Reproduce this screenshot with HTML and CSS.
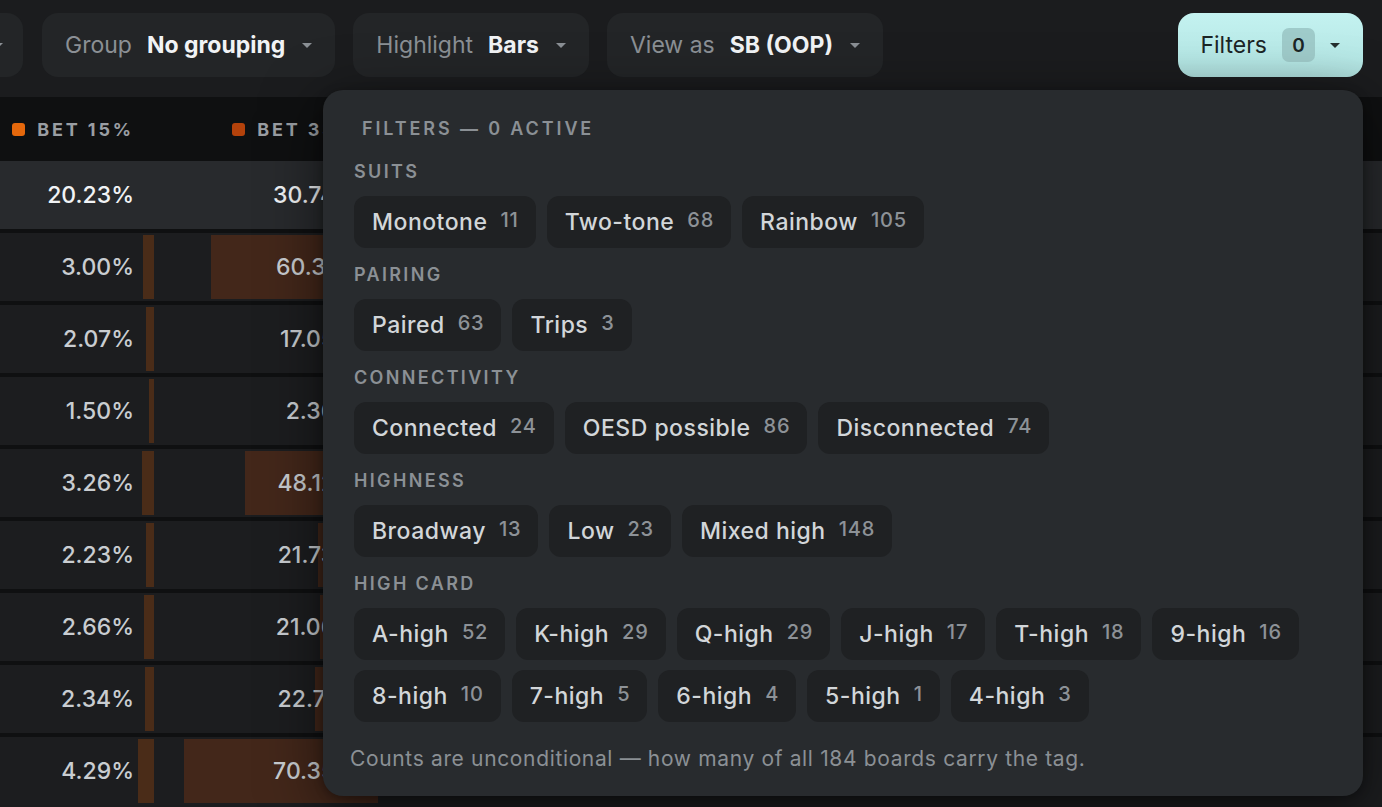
FILE: index.html
```html
<!DOCTYPE html>
<html lang="en">
<head>
    <meta charset="UTF-8">
    <meta name="viewport" content="width=device-width, initial-scale=1.0">
    <title>Board Explorer</title>
    <link rel="stylesheet" href="styles.css">
</head>
<body>
    <div class="toolbar">
        <div class="tool tool-cut">
            <span class="caret"></span>
        </div>
        <div class="tool">
            <span class="tool-label">Group</span>
            <span class="tool-value">No grouping</span>
            <span class="caret"></span>
        </div>
        <div class="tool">
            <span class="tool-label">Highlight</span>
            <span class="tool-value">Bars</span>
            <span class="caret"></span>
        </div>
        <div class="tool">
            <span class="tool-label">View as</span>
            <span class="tool-value">SB (OOP)</span>
            <span class="caret"></span>
        </div>
        <div class="tool tool-filters">
            <span class="filters-label">Filters</span>
            <span class="filters-count">0</span>
            <span class="caret caret-dark"></span>
        </div>
    </div>

    <div class="table">
        <div class="row row-head">
            <div class="cell c1"><span class="dot dot-a"></span>BET 15%</div>
            <div class="cell c2"><span class="dot dot-b"></span>BET 33%</div>
            <div class="cell rest"></div>
        </div>
        <div class="row row-total">
            <div class="cell c1">20.23%</div>
            <div class="cell c2">30.74%</div>
            <div class="cell rest"></div>
        </div>
        <div class="row">
            <div class="cell c1 bar" style="--w:11px">3.00%</div>
            <div class="cell c2 bar" style="--w:167px">60.31%</div>
            <div class="cell rest"></div>
        </div>
        <div class="row">
            <div class="cell c1 bar" style="--w:8px">2.07%</div>
            <div class="cell c2 bar" style="--w:47px">17.05%</div>
            <div class="cell rest"></div>
        </div>
        <div class="row">
            <div class="cell c1 bar" style="--w:5px">1.50%</div>
            <div class="cell c2 bar" style="--w:6px">2.36%</div>
            <div class="cell rest"></div>
        </div>
        <div class="row">
            <div class="cell c1 bar" style="--w:12px">3.26%</div>
            <div class="cell c2 bar" style="--w:133px">48.12%</div>
            <div class="cell rest"></div>
        </div>
        <div class="row">
            <div class="cell c1 bar" style="--w:8px">2.23%</div>
            <div class="cell c2 bar" style="--w:60px">21.73%</div>
            <div class="cell rest"></div>
        </div>
        <div class="row">
            <div class="cell c1 bar" style="--w:10px">2.66%</div>
            <div class="cell c2 bar" style="--w:58px">21.06%</div>
            <div class="cell rest"></div>
        </div>
        <div class="row">
            <div class="cell c1 bar" style="--w:9px">2.34%</div>
            <div class="cell c2 bar" style="--w:63px">22.71%</div>
            <div class="cell rest"></div>
        </div>
        <div class="row">
            <div class="cell c1 bar" style="--w:16px">4.29%</div>
            <div class="cell c2 bar" style="--w:194px">70.35%</div>
            <div class="cell rest"></div>
        </div>
    </div>

    <div class="filters-panel">
        <div class="panel-title">Filters — 0 active</div>

        <div class="section">
            <div class="section-label">Suits</div>
            <div class="chips">
                <div class="chip">Monotone<span class="num">11</span></div>
                <div class="chip">Two-tone<span class="num">68</span></div>
                <div class="chip">Rainbow<span class="num">105</span></div>
            </div>
        </div>

        <div class="section">
            <div class="section-label">Pairing</div>
            <div class="chips">
                <div class="chip">Paired<span class="num">63</span></div>
                <div class="chip">Trips<span class="num">3</span></div>
            </div>
        </div>

        <div class="section">
            <div class="section-label">Connectivity</div>
            <div class="chips">
                <div class="chip">Connected<span class="num">24</span></div>
                <div class="chip">OESD possible<span class="num">86</span></div>
                <div class="chip">Disconnected<span class="num">74</span></div>
            </div>
        </div>

        <div class="section">
            <div class="section-label">Highness</div>
            <div class="chips">
                <div class="chip">Broadway<span class="num">13</span></div>
                <div class="chip">Low<span class="num">23</span></div>
                <div class="chip">Mixed high<span class="num">148</span></div>
            </div>
        </div>

        <div class="section">
            <div class="section-label">High card</div>
            <div class="chips">
                <div class="chip">A-high<span class="num">52</span></div>
                <div class="chip">K-high<span class="num">29</span></div>
                <div class="chip">Q-high<span class="num">29</span></div>
                <div class="chip">J-high<span class="num">17</span></div>
                <div class="chip">T-high<span class="num">18</span></div>
                <div class="chip">9-high<span class="num">16</span></div>
                <div class="chip">8-high<span class="num">10</span></div>
                <div class="chip">7-high<span class="num">5</span></div>
                <div class="chip">6-high<span class="num">4</span></div>
                <div class="chip">5-high<span class="num">1</span></div>
                <div class="chip">4-high<span class="num">3</span></div>
            </div>
        </div>

        <p class="panel-note">Counts are unconditional — how many of all 184 boards carry the tag.</p>
    </div>
</body>
</html>
```

FILE: styles.css
```css
body {
    font-family: Inter, "Noto Sans", sans-serif;
    background-color: #1b1c1e;
    color: #e8eaec;
    margin: 0;
    padding: 0;
    height: 807px;
    overflow: hidden;
    position: relative;
}

/* toolbar */
.toolbar {
    display: flex;
    align-items: center;
    gap: 18px;
    height: 97px;
    padding-right: 19px;
    padding-bottom: 7px;
    margin-left: -157px;
    box-sizing: border-box;
}
.tool {
    display: flex;
    align-items: center;
    height: 64px;
    padding: 0 23px;
    background: #232527;
    border-radius: 16px;
    font-size: 23px;
    white-space: nowrap;
    box-sizing: border-box;
}
.tool-cut {
    width: 180px;
    justify-content: flex-end;
    padding-right: 20px;
    margin-right: 1px;
}
.tool-label {
    color: #8b9095;
    margin-right: 15px;
}
.tool-value {
    color: #f1f3f5;
    font-weight: 700;
    margin-right: 17px;
}
.caret {
    width: 0;
    height: 0;
    border-left: 5px solid transparent;
    border-right: 5px solid transparent;
    border-top: 5px solid #8b9095;
}
.caret-dark {
    border-top-color: #25302f;
}
.tool-filters {
    margin-left: auto;
    padding: 0 23px 0 22px;
    background: linear-gradient(180deg, #c4f2f0 0%, #b6e8e6 70%, #acdcda 100%);
    color: #1b2526;
}
.filters-label {
    margin-right: 15px;
}
.filters-count {
    display: flex;
    align-items: center;
    justify-content: center;
    width: 33px;
    height: 34px;
    border-radius: 7px;
    background: #9fcbca;
    font-size: 19px;
    font-weight: 600;
    margin-right: 15px;
}

/* table */
.table {
    display: flex;
    flex-direction: column;
    gap: 4px;
    background: #0f1011;
}
.row {
    display: flex;
    height: 68px;
    background: #1c1d1f;
}
.row-head {
    height: 64px;
    background: #0f1011;
    margin-bottom: -4px;
}
.row-total {
    background: #282a2d;
}
.cell {
    display: flex;
    align-items: center;
    justify-content: flex-end;
    box-sizing: border-box;
    padding-right: 20px;
    font-size: 23px;
    font-weight: 500;
    color: #c9cdd1;
}
.row-total .cell {
    color: #f1f3f5;
}
.row-head .cell {
    font-size: 18px;
    font-weight: 700;
    letter-spacing: 0.16em;
    color: #9a9ea3;
    padding-right: 20px;
}
.c1 {
    width: 154px;
    --bar: #4a2c18;
}
.c2 {
    width: 224px;
    --bar: #43271a;
}
.rest {
    flex: 1;
}
.bar {
    background: linear-gradient(var(--bar), var(--bar)) right center / var(--w) calc(100% - 4px) no-repeat;
}
.dot {
    width: 13px;
    height: 13px;
    border-radius: 3px;
    margin-right: 12px;
}
.dot-a {
    background: #e5680c;
}
.dot-b {
    background: #b4420b;
}

/* filters dropdown */
.filters-panel {
    position: absolute;
    top: 90px;
    left: 323px;
    width: 1040px;
    height: 706px;
    box-sizing: border-box;
    padding: 27px 31px 25px;
    background: #282b2e;
    border-radius: 20px;
    box-shadow: 0 14px 60px rgba(0, 0, 0, 0.55), 0 2px 10px rgba(0, 0, 0, 0.3);
    display: flex;
    flex-direction: column;
}
.panel-title {
    line-height: 24px;
    font-size: 18px;
    font-weight: 600;
    letter-spacing: 0.16em;
    text-transform: uppercase;
    color: #8b9095;
    padding-left: 8px;
    margin-bottom: 19px;
}
.section {
    margin-bottom: 15px;
}
.section-label {
    line-height: 24px;
    font-size: 18px;
    font-weight: 600;
    letter-spacing: 0.13em;
    text-transform: uppercase;
    color: #8b9095;
    margin-bottom: 12px;
}
.chips {
    display: flex;
    flex-wrap: wrap;
    gap: 10px 11px;
}
.chip {
    display: flex;
    align-items: center;
    gap: 13px;
    height: 52px;
    padding: 0 17px 0 18px;
    background: #1f2123;
    border-radius: 12px;
    font-size: 23px;
    font-weight: 500;
    letter-spacing: 0.5px;
    color: #d2d6d9;
    white-space: nowrap;
}
.chip .num {
    font-size: 20px;
    letter-spacing: 0.8px;
    color: #8d9297;
    position: relative;
    top: -2px;
}
.panel-note {
    margin: 10px 0 0 -4px;
    line-height: 24px;
    font-size: 21px;
    letter-spacing: 0.65px;
    color: #8b9095;
}
```
